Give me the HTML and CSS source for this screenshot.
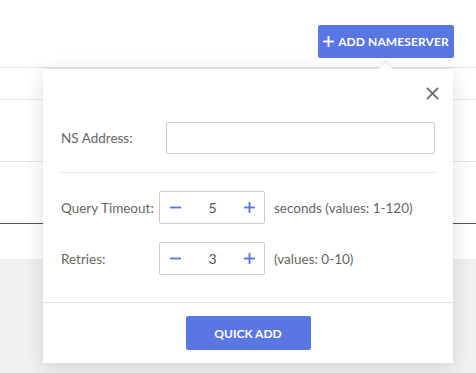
FILE: index.html
```html
<!DOCTYPE html>
<html lang="en">

<head>
  <meta charset="UTF-8">
  <meta name="viewport" content="width=device-width, initial-scale=1.0">
  <title>Nameservers</title>
  <link rel="stylesheet" href="styles.css">
</head>

<body>
  <div class="page">
    <header class="toolbar">
      <button class="btn btn-add">
        <svg class="plus-icon" viewBox="0 0 12 12">
          <rect x="5" y="0" width="2" height="12" />
          <rect x="0" y="5" width="12" height="2" />
        </svg>
        ADD NAMESERVER
      </button>
    </header>

    <div class="table">
      <div class="row row-short"></div>
      <div class="row"></div>
      <div class="row"></div>
      <div class="row row-last"></div>
    </div>

    <div class="page-footer"></div>
  </div>

  <!-- Quick add popover -->
  <div class="popover">
    <span class="popover-arrow"></span>
    <div class="popover-head">
      <button class="close-btn" aria-label="Close">
        <svg viewBox="0 0 16 16">
          <path d="M2 2 L14 14 M14 2 L2 14" />
        </svg>
      </button>
    </div>

    <div class="popover-body">
      <div class="field">
        <label class="field-label label-wide">NS Address:</label>
        <input class="text-input" type="text">
      </div>

      <hr class="divider">

      <div class="field">
        <label class="field-label">Query Timeout:</label>
        <div class="stepper">
          <button class="step-btn" aria-label="Decrease">
            <svg viewBox="0 0 12 12"><rect x="0" y="5" width="12" height="2" /></svg>
          </button>
          <span class="step-value">5</span>
          <button class="step-btn" aria-label="Increase">
            <svg viewBox="0 0 12 12"><rect x="5" y="0" width="2" height="12" /><rect x="0" y="5" width="12" height="2" /></svg>
          </button>
        </div>
        <span class="hint">seconds (values: 1-120)</span>
      </div>

      <div class="field field-gap">
        <label class="field-label">Retries:</label>
        <div class="stepper">
          <button class="step-btn" aria-label="Decrease">
            <svg viewBox="0 0 12 12"><rect x="0" y="5" width="12" height="2" /></svg>
          </button>
          <span class="step-value">3</span>
          <button class="step-btn" aria-label="Increase">
            <svg viewBox="0 0 12 12"><rect x="5" y="0" width="2" height="12" /><rect x="0" y="5" width="12" height="2" /></svg>
          </button>
        </div>
        <span class="hint">(values: 0-10)</span>
      </div>
    </div>

    <footer class="popover-foot">
      <button class="btn btn-quick">QUICK ADD</button>
    </footer>
  </div>
</body>

</html>
```

FILE: styles.css
```css
/* Base */
body {
  margin: 0;
  width: 476px;
  height: 373px;
  overflow: hidden;
  font-family: Lato, 'Noto Sans', sans-serif;
  font-size: 13.5px;
  color: #555;
  background: #fff;
  position: relative;
}

.page {
  display: flex;
  flex-direction: column;
  height: 373px;
}

/* Toolbar */
.toolbar {
  height: 67px;
  box-sizing: border-box;
  padding: 25px 22px 0 0;
  display: flex;
  justify-content: flex-end;
  align-items: flex-start;
}

.btn {
  background: #5a76e3;
  color: #fff;
  border: none;
  border-radius: 2px;
  font-family: inherit;
  font-weight: 700;
  font-size: 12px;
  cursor: pointer;
}

.btn-add {
  width: 136px;
  height: 33px;
  display: flex;
  align-items: center;
  justify-content: center;
  gap: 4px;
  padding: 0;
  letter-spacing: 0.1px;
}

.plus-icon {
  width: 11px;
  height: 11px;
  fill: #fff;
}

/* Table behind */
.table {
  display: flex;
  flex-direction: column;
}

.row {
  border-top: 1px solid #e2e2e2;
  height: 61px;
}

.row-short {
  height: 31px;
}

.row-last {
  border-top-color: #555;
  height: 35px;
}

.page-footer {
  flex: 1;
  background: #eef0f2;
}

/* Popover */
.popover {
  position: absolute;
  left: 43px;
  top: 68px;
  width: 410px;
  height: 295px;
  box-sizing: border-box;
  background: #fff;
  border-top: 1px solid #e2e2e2;
  box-shadow: 0 4px 18px rgba(0, 0, 0, 0.13);
  display: flex;
  flex-direction: column;
}

.popover-arrow {
  position: absolute;
  top: -6px;
  left: 337px;
  width: 10px;
  height: 10px;
  background: #fff;
  border-top: 1px solid #e2e2e2;
  border-left: 1px solid #e2e2e2;
  transform: rotate(45deg);
}

.popover-head {
  height: 53px;
  box-sizing: border-box;
  padding: 17px 13px 0 0;
  display: flex;
  justify-content: flex-end;
  align-items: flex-start;
}

.close-btn {
  width: 15px;
  height: 15px;
  padding: 0;
  border: none;
  background: none;
  cursor: pointer;
}

.close-btn svg {
  width: 15px;
  height: 15px;
  display: block;
}

.close-btn path {
  stroke: #666;
  stroke-width: 1.8;
  fill: none;
}

.popover-body {
  padding: 0 18px;
  flex: 1;
}

.field {
  display: flex;
  align-items: center;
}

.field-gap {
  margin-top: 18px;
}

.field-label {
  width: 98px;
  color: #666;
  flex-shrink: 0;
}

.label-wide {
  width: 105px;
}

.text-input {
  flex: 1;
  height: 32px;
  box-sizing: border-box;
  border: 1px solid #ccc;
  border-radius: 2px;
  font-family: inherit;
  outline: none;
}

.divider {
  border: none;
  border-top: 1px solid #e2e2e2;
  margin: 18px 0;
}

/* Stepper */
.stepper {
  width: 106px;
  height: 33px;
  box-sizing: border-box;
  border: 1px solid #ccc;
  border-radius: 2px;
  display: flex;
  align-items: center;
  justify-content: space-between;
  padding: 0 9px 0 10px;
}

.step-btn {
  width: 11px;
  height: 11px;
  border: none;
  background: none;
  padding: 0;
  cursor: pointer;
}

.step-btn svg {
  width: 11px;
  height: 11px;
  display: block;
  fill: #5a76e3;
}

.step-value {
  color: #555;
  font-size: 14px;
}

.hint {
  margin-left: 9px;
  color: #666;
}

/* Footer */
.popover-foot {
  border-top: 1px solid #e2e2e2;
  padding: 13px 0 13px;
  display: flex;
  justify-content: center;
}

.btn-quick {
  width: 125px;
  height: 34px;
}
```
